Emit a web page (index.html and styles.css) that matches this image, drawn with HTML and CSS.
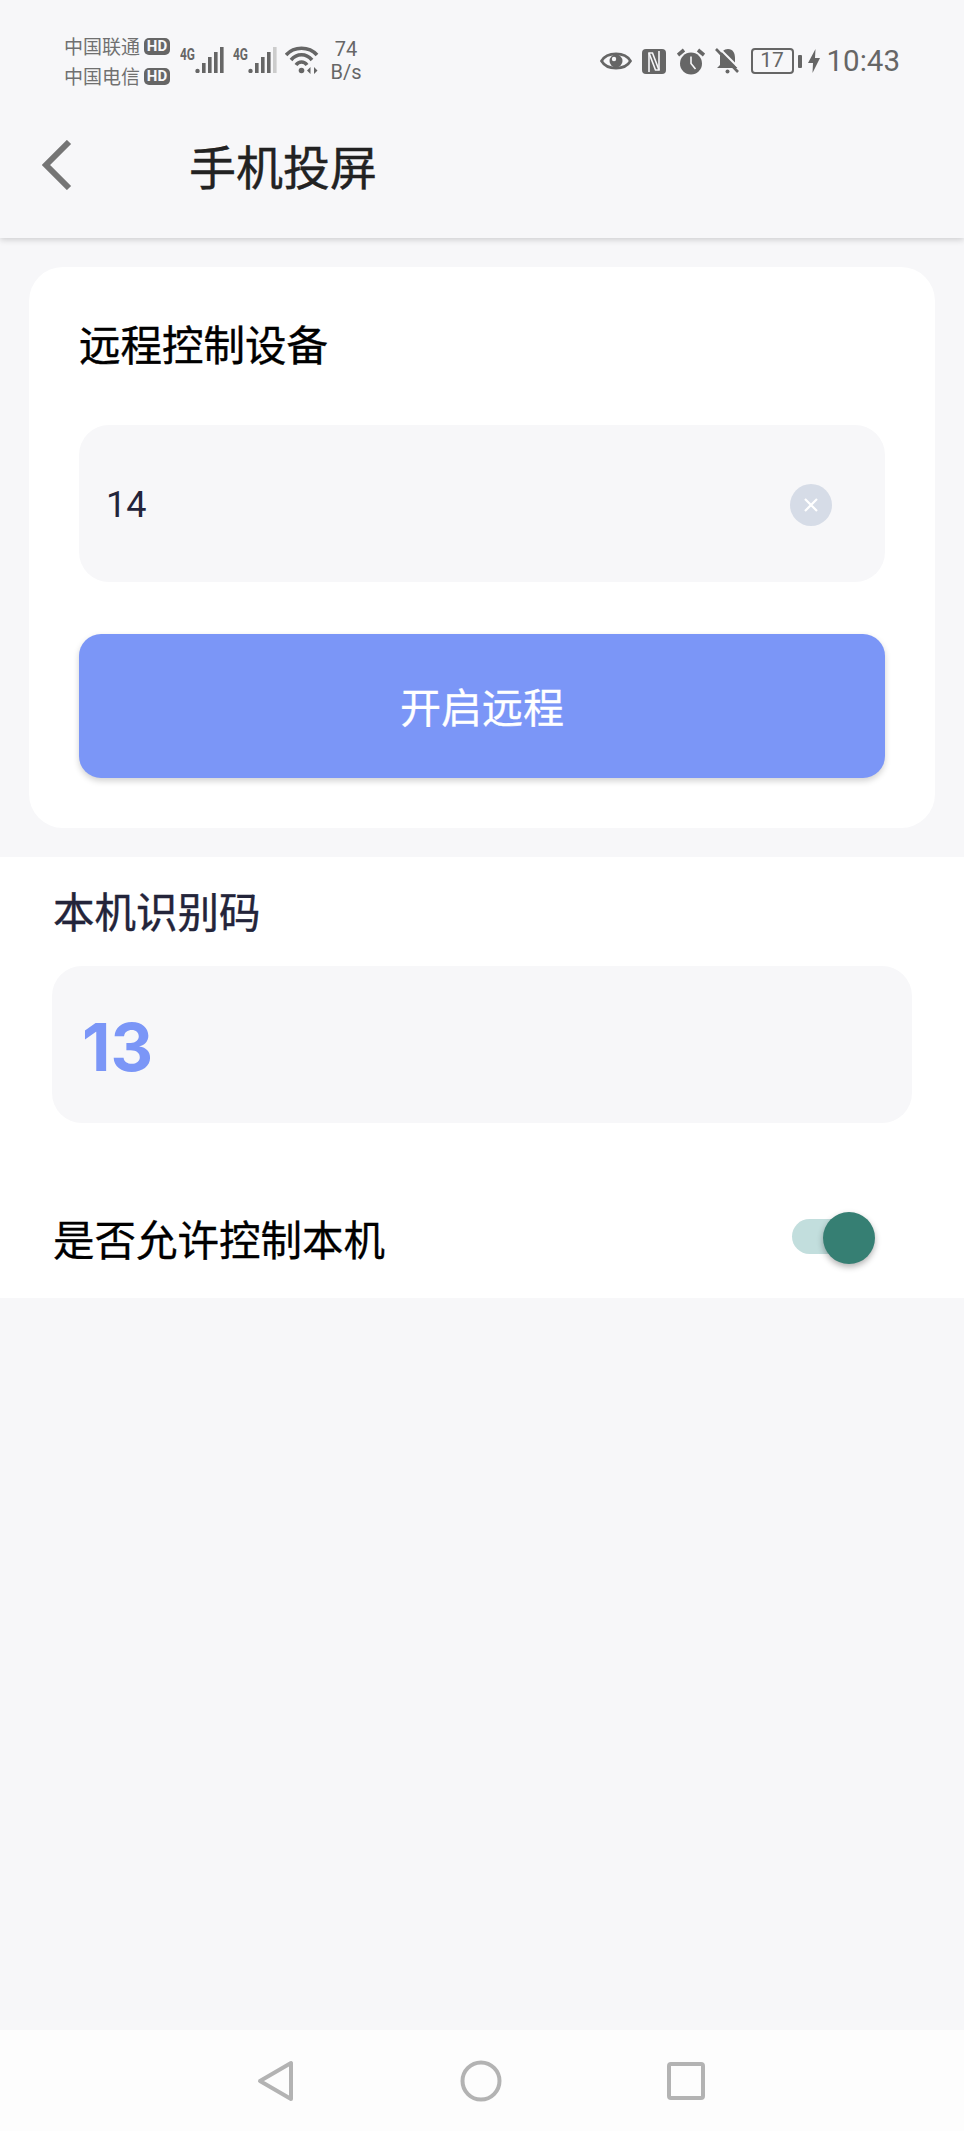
FILE: index.html

```html
<!DOCTYPE html>
<html lang="zh-CN">
<head>
  <meta charset="UTF-8" />
  <meta name="viewport" content="width=device-width, initial-scale=1.0"/>
  <title>手机投屏</title>
  <link rel="stylesheet" href="styles.css">
</head>
<body>

<header class="top">
  <div class="status">
    <div class="carriers">
      <div class="carrier">中国联通<span class="hd">HD</span></div>
      <div class="carrier">中国电信<span class="hd">HD</span></div>
    </div>
    <svg class="signal" viewBox="0 -5 44 31">
      <text x="0" y="13" class="tag" textLength="15" lengthAdjust="spacingAndGlyphs">4G</text>
      <circle cx="17.5" cy="24" r="2.2" />
      <rect x="22" y="16" width="3.6" height="10" />
      <rect x="28" y="10" width="3.6" height="16" />
      <rect x="34" y="5" width="3.6" height="21" />
      <rect x="40" y="0" width="3.6" height="26" />
    </svg>
    <svg class="signal second" viewBox="0 -5 44 31">
      <text x="0" y="13" class="tag" textLength="15" lengthAdjust="spacingAndGlyphs">4G</text>
      <circle cx="17.5" cy="24" r="2.2" />
      <rect x="22" y="16" width="3.6" height="10" />
      <rect x="28" y="10" width="3.6" height="16" />
      <rect x="34" y="5" width="3.6" height="21" />
      <rect x="40" y="0" width="3.6" height="26" class="off" />
    </svg>
    <svg class="wifi" viewBox="0 0 34 28">
      <path d="M1 9 C9 0 24 0 32 9" />
      <path d="M6 14 C12 7 21 7 27 14" />
      <path d="M11 19 C14 15 19 15 22 19" />
      <circle cx="16.5" cy="24.5" r="2.8" class="dot" />
      <path d="M25.5 21 L22 24.5 L25.5 28 Z M29 21 L32.5 24.5 L29 28 Z" class="dot" />
    </svg>
    <div class="speed"><span>74</span><span>B/s</span></div>

    <div class="status-right">
      <svg class="eye" viewBox="0 0 32 22">
        <path d="M1.5 11 C7 1.5 25 1.5 30.5 11 C25 20.5 7 20.5 1.5 11 Z" />
        <circle cx="16" cy="11" r="6.5" class="dot" />
        <circle cx="14" cy="9" r="2.2" class="hole" />
      </svg>
      <svg class="nfc" viewBox="0 0 24 25">
        <rect x="0" y="0" width="24" height="25" rx="4" class="dot" />
        <path d="M7 23 V4 H10.5 L17 21" class="cut" />
        <path d="M17 2 V21 H13.5 L7 4" class="cut" />
      </svg>
      <svg class="alarm" viewBox="0 0 28 27">
        <circle cx="14" cy="15.5" r="11" class="dot" />
        <path d="M14 8.5 V15.5 L18.5 21" class="cut" />
        <path d="M1 7 L7 2 M27 7 L21 2" class="thick" />
      </svg>
      <svg class="bell" viewBox="0 0 24 26">
        <path d="M13 1 C18 1 20 5 20 10 V17 L23 20 H2 L5 17 V8 C6 4 9 1 13 1 Z" class="dot" />
        <circle cx="12.5" cy="23.5" r="2" class="dot" />
        <path d="M5 1 L24 20" class="slash-gap" />
        <path d="M1 1 L23 24" class="slash" />
      </svg>
      <div class="battery">17</div>
      <div class="nub"></div>
      <svg class="bolt" viewBox="0 0 12 24">
        <path d="M7.5 0 L0 14 H5 L4.5 24 L12 9 H7 Z" class="dot" />
      </svg>
      <div class="clock">10:43</div>
    </div>
  </div>

  <div class="appbar">
    <svg class="back" viewBox="0 0 30 50">
      <path d="M27 2 L4 25 L27 48" />
    </svg>
    <h1>手机投屏</h1>
  </div>
</header>

<main class="page">
  <section class="card">
    <h2>远程控制设备</h2>
    <div class="field">
      <span class="field-value">14</span>
      <span class="clear">
        <svg viewBox="0 0 16 16"><path d="M2 2 L14 14 M14 2 L2 14" /></svg>
      </span>
    </div>
    <button class="primary">开启远程</button>
  </section>

  <section class="local">
    <div class="local-label">本机识别码</div>
    <div class="code-box">13</div>
    <div class="allow-row">
      <span>是否允许控制本机</span>
      <span class="switch"><span class="thumb"></span></span>
    </div>
  </section>
</main>

<footer class="navbar">
  <svg class="nav-back" viewBox="0 0 37 42">
    <path d="M34 3 V39 L3 21 Z" />
  </svg>
  <svg class="nav-home" viewBox="0 0 42 42">
    <circle cx="21" cy="21" r="18.5" />
  </svg>
  <svg class="nav-recent" viewBox="0 0 38 38">
    <rect x="2" y="2" width="34" height="34" rx="2" />
  </svg>
</footer>

</body>
</html>
```

FILE: styles.css

```css
* {
  box-sizing: border-box;
}
html, body {
  height: 100%;
}
body {
  font-family: "Noto Sans CJK SC", Roboto, sans-serif;
  background-color: #f7f7f9;
  margin: 0;
  padding: 0;
  height: 2131px;
  display: flex;
  flex-direction: column;
  color: #23243a;
  overflow: hidden;
}
svg {
  display: block;
  flex: none;
}

/* status bar */
.top {
  height: 238px;
  background: #f7f7f9;
  box-shadow: 0 2px 6px rgba(0,0,0,0.16);
  position: relative;
}
.status {
  height: 90px;
  padding: 32px 64px 0 64px;
  display: flex;
  align-items: center;
  color: #666;
}
.carriers {
  width: 116px;
  font-size: 19px;
  line-height: 30px;
  color: #707070;
}
.carrier {
  display: flex;
  align-items: center;
  white-space: nowrap;
}
.hd {
  font-family: Roboto, sans-serif;
  font-weight: 700;
  font-size: 15px;
  line-height: 17px;
  width: 26px;
  text-align: center;
  margin-left: 4px;
  background: #666;
  color: #f7f7f9;
  border-radius: 5px;
}
.signal {
  width: 44px;
  height: 31px;
  fill: #666;
  margin-bottom: 7px;
}
.signal.second {
  margin-left: 9px;
}
.tag {
  font-family: Roboto, sans-serif;
  font-weight: 700;
  font-size: 17px;
}
.off {
  fill: #ccc;
}
.wifi {
  width: 34px;
  height: 28px;
  margin-left: 8px;
  margin-top: -2px;
  fill: none;
  stroke: #666;
  stroke-width: 3.6;
}
.wifi .dot {
  fill: #666;
  stroke: none;
}
.speed {
  width: 40px;
  margin-left: 7px;
  font-family: Roboto, sans-serif;
  font-size: 20px;
  line-height: 23px;
  text-align: center;
  display: flex;
  flex-direction: column;
  color: #666;
}
.status-right {
  margin-left: auto;
  display: flex;
  align-items: center;
}
.eye {
  width: 32px;
  height: 22px;
  fill: none;
  stroke: #666;
  stroke-width: 2.6;
}
.dot {
  fill: #666;
  stroke: none;
}
.hole {
  fill: #f7f7f9;
  stroke: none;
}
.cut {
  fill: none;
  stroke: #f7f7f9;
  stroke-width: 1.6;
}
.thick {
  fill: none;
  stroke: #666;
  stroke-width: 3.6;
}
.slash {
  fill: none;
  stroke: #666;
  stroke-width: 2.6;
}
.slash-gap {
  fill: none;
  stroke: #f7f7f9;
  stroke-width: 2;
}
.nfc {
  width: 24px;
  height: 25px;
  margin-left: 10px;
}
.alarm {
  width: 28px;
  height: 27px;
  margin-left: 11px;
}
.bell {
  width: 24px;
  height: 26px;
  margin-left: 10px;
}
.battery {
  width: 43px;
  height: 26px;
  margin-left: 12px;
  border: 2.5px solid #666;
  border-radius: 4px;
  font-family: Roboto, sans-serif;
  font-size: 21px;
  line-height: 21px;
  text-align: center;
  color: #666;
}
.nub {
  width: 4px;
  height: 13px;
  margin-left: 4px;
  background: #666;
  border-radius: 1px;
}
.bolt {
  width: 12px;
  height: 24px;
  margin-left: 6px;
}
.clock {
  font-family: Roboto, sans-serif;
  font-size: 29.5px;
  margin-left: 7px;
  color: #666;
}

/* title bar */
.appbar {
  height: 148px;
  padding: 0 0 0 42px;
  display: flex;
  align-items: center;
}
.back {
  width: 30px;
  height: 50px;
  margin-top: 2px;
  fill: none;
  stroke: #757575;
  stroke-width: 6;
}
h1 {
  margin: 2px 0 0 117px;
  font-size: 47px;
  font-weight: 400;
  line-height: 60px;
  color: #222;
  -webkit-text-stroke: 0.4px #222;
}

/* page */
.page {
  flex: 1;
}
.card {
  margin: 29px 29px 0;
  padding: 46px 50px 50px;
  background: white;
  border-radius: 34px;
}
h2 {
  margin: 0 0 52px;
  font-size: 41.5px;
  font-weight: 400;
  line-height: 60px;
  color: #000;
  -webkit-text-stroke: 0.4px #000;
}
.field {
  height: 157px;
  padding: 2px 53px 0 27px;
  background: #f7f7f9;
  border-radius: 30px;
  display: flex;
  align-items: center;
  justify-content: space-between;
}
.field-value {
  font-family: Roboto, sans-serif;
  font-size: 36px;
}
.clear {
  width: 42px;
  height: 42px;
  border-radius: 50%;
  background: #d6dce7;
  display: flex;
  align-items: center;
  justify-content: center;
}
.clear svg {
  width: 16px;
  height: 16px;
  fill: none;
  stroke: white;
  stroke-width: 2.2;
}
.primary {
  display: block;
  width: 100%;
  height: 144px;
  margin-top: 52px;
  padding: 0 0 2px;
  border: none;
  border-radius: 22px;
  background: #7b96f7;
  color: white;
  font-family: inherit;
  font-size: 41px;
  -webkit-text-stroke: 0.3px white;
  box-shadow: 0 3px 6px rgba(0,0,0,0.18);
}
.local {
  margin-top: 29px;
  padding: 27px 52px 20px;
  background: white;
}
.local-label {
  font-size: 41.5px;
  line-height: 52px;
  padding-left: 1px;
  margin-bottom: 30px;
  -webkit-text-stroke: 0.4px #23243a;
}
.code-box {
  height: 157px;
  padding: 4px 0 0 30px;
  background: #f7f7f9;
  border-radius: 30px;
  display: flex;
  align-items: center;
  font-family: Inter, Roboto, sans-serif;
  font-size: 66px;
  font-weight: 700;
  color: #7b96f7;
}
.allow-row {
  height: 80px;
  margin-top: 75px;
  padding-left: 1px;
  display: flex;
  align-items: center;
  justify-content: space-between;
  font-size: 41.5px;
  color: #000;
  -webkit-text-stroke: 0.3px #000;
}
.switch {
  width: 72px;
  height: 35px;
  margin: 0 48px 4px 0;
  background: #c2dedd;
  border-radius: 18px;
  position: relative;
}
.thumb {
  position: absolute;
  right: -11px;
  top: -7px;
  width: 52px;
  height: 52px;
  border-radius: 50%;
  background: #367f73;
  box-shadow: 0 3px 6px rgba(0,0,0,0.3);
}

/* nav bar */
.navbar {
  height: 101px;
  background: #fdfdfd;
  padding: 0 259px 0 257px;
  display: flex;
  align-items: center;
  justify-content: space-between;
  fill: none;
  stroke: #b3b3b3;
  stroke-width: 4;
  stroke-linejoin: round;
}
.nav-back {
  width: 37px;
  height: 42px;
}
.nav-home {
  width: 42px;
  height: 42px;
}
.nav-recent {
  width: 38px;
  height: 38px;
}
```
